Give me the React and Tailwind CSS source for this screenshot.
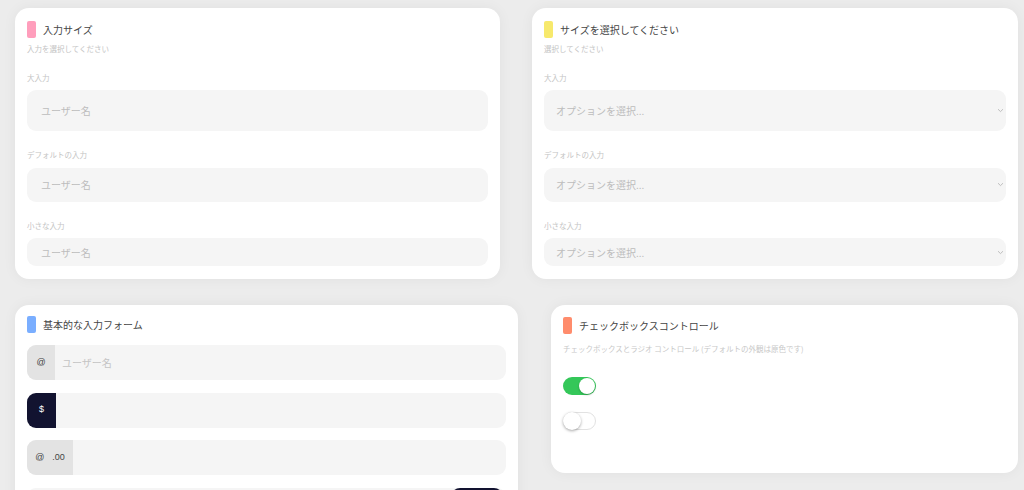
import React from "react";

const font = { fontFamily: '"Noto Sans CJK JP", "Noto Sans", sans-serif' };

function Title({ color, children }) {
  return (
    <div className="flex items-center gap-[7px] h-[17px]">
      <div className={`w-[9px] h-[17px] rounded-[2px] ${color}`} />
      <div className="text-[10px] leading-none text-[#454545]">{children}</div>
    </div>
  );
}

function Chevron() {
  return (
    <svg width="7" height="5" viewBox="0 0 7 5" className="text-[#b8b8b8]">
      <path d="M1 1.2 L3.5 3.6 L6 1.2" fill="none" stroke="currentColor" strokeWidth="0.9" />
    </svg>
  );
}

function Field({ h, select }) {
  return (
    <div className={`flex items-center justify-between bg-[#f5f5f5] rounded-[9px] ${select ? "pl-[12px]" : "pl-[14px]"} pr-[2px] ${h}`}>
      <span className="text-[10px] text-[#bdbdbd]">
        {select ? "オプションを選択..." : "ユーザー名"}
      </span>
      {select && <Chevron />}
    </div>
  );
}

function SizeCard({ color, title, sub, select, width }) {
  return (
    <div className={`bg-white rounded-[14px] shadow-[0_0_14px_rgba(0,0,0,0.05)] px-[12px] pt-[13px] pb-[13px] ${width}`}>
      <Title color={color}>{title}</Title>
      <div className="mt-[7px] text-[7.5px] leading-none text-[#c4c4c4]">{sub}</div>
      <div className="mt-[21px] text-[7.5px] leading-none text-[#c4c4c4]">大入力</div>
      <div className="mt-[9px]"><Field h="h-[41px]" select={select} /></div>
      <div className="mt-[20px] text-[7.5px] leading-none text-[#c4c4c4]">デフォルトの入力</div>
      <div className="mt-[9px]"><Field h="h-[34px]" select={select} /></div>
      <div className="mt-[20px] text-[7.5px] leading-none text-[#c4c4c4]">小さな入力</div>
      <div className="mt-[9px]"><Field h="h-[28px]" select={select} /></div>
    </div>
  );
}

function Group({ addon, dark, placeholder, button }) {
  return (
    <div className="flex h-[35px] rounded-[9px] bg-[#f5f5f5] overflow-hidden">
      {addon && (
        <div
          className={`flex items-center justify-center text-[9px] ${
            dark ? "bg-[#121330] text-white w-[29px]" : "bg-[#e3e3e3] text-[#444]"
          } ${addon === "@ .00" ? "w-[46px] gap-[8px]" : "w-[28px]"}`}
          style={{ fontFamily: '"Liberation Sans", sans-serif' }}
        >
          {addon === "@ .00" ? (
            <>
              <span>@</span>
              <span>.00</span>
            </>
          ) : (
            addon
          )}
        </div>
      )}
      <div className="flex-1 flex items-center pl-[7px] text-[10px] text-[#c4c4c4]">{placeholder}</div>
      {button && <div className="w-[52px] bg-[#121330] rounded-[9px] mr-[3px]" />}
    </div>
  );
}

export default function App() {
  return (
    <div className="w-[1024px] h-[490px] overflow-hidden bg-[#ececec] pl-[15px] pt-[8px]" style={font}>
      <div className="flex gap-[32px]">
        <SizeCard color="bg-[#ff9ebc]" title="入力サイズ" sub="入力を選択してください" width="w-[485px]" />
        <SizeCard color="bg-[#f7e96c]" title="サイズを選択してください" sub="選択してください" select width="w-[486px]" />
      </div>
      <div className="flex gap-[33px] mt-[26px] items-start">
        <div className="w-[503px] bg-white rounded-[14px] shadow-[0_0_14px_rgba(0,0,0,0.05)] px-[12px] pt-[11px] pb-[20px]">
          <Title color="bg-[#7aaeff]">基本的な入力フォーム</Title>
          <div className="mt-[12px] flex flex-col gap-[12.5px]">
            <Group addon="@" placeholder="ユーザー名" />
            <Group addon="$" dark />
            <Group addon="@ .00" />
            <Group button />
          </div>
        </div>
        <div className="w-[467px] h-[168px] bg-white rounded-[14px] shadow-[0_0_14px_rgba(0,0,0,0.05)] px-[12px] pt-[12px]">
          <Title color="bg-[#ff8c6c]">チェックボックスコントロール</Title>
          <div className="mt-[11px] text-[7.5px] leading-none text-[#c8c8c8]">
            チェックボックスとラジオ コントロール (デフォルトの外観は原色です)
          </div>
          <div className="mt-[24px] flex flex-col gap-[17px]">
            <div className="w-[33px] h-[18px] rounded-full bg-[#34c759] relative">
              <div className="absolute right-[1px] top-[1px] w-[16px] h-[16px] rounded-full bg-white shadow-[0_1px_2px_rgba(0,0,0,0.25)]" />
            </div>
            <div className="w-[33px] h-[18px] rounded-full bg-white border border-[#e2e2e2] relative">
              <div className="absolute left-[-1px] top-[-1px] w-[18px] h-[18px] rounded-full bg-white shadow-[0_1px_3px_rgba(0,0,0,0.35)]" />
            </div>
          </div>
        </div>
      </div>
    </div>
  );
}
